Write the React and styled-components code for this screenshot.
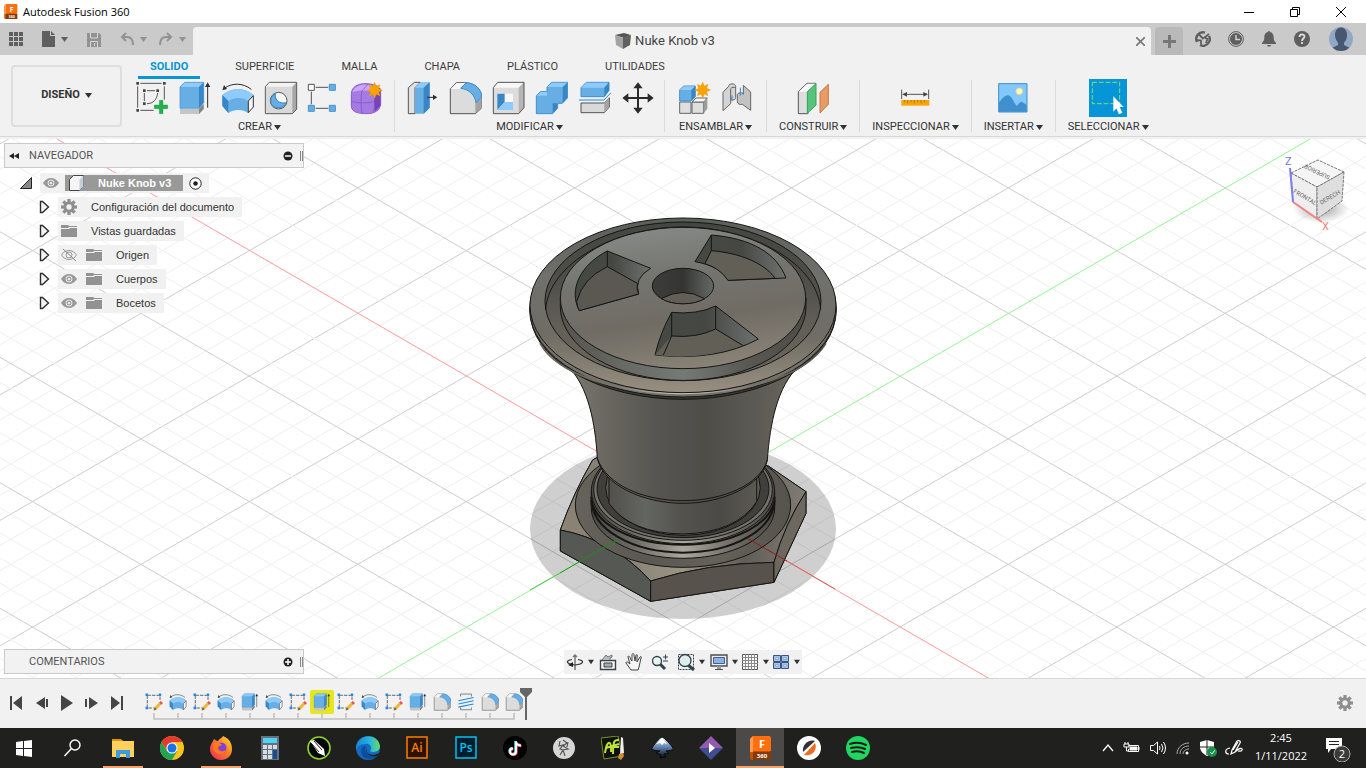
import React from 'react';
import styled, { createGlobalStyle, css } from 'styled-components';

const ui = 'Roboto, "Liberation Sans", sans-serif';
const system = '"Open Sans", "Liberation Sans", sans-serif';

const GlobalStyle = createGlobalStyle`
  *, *::before, *::after { box-sizing: border-box; }
  body { margin: 0; background: #f0f0f0; color: #333; font: 11px/16px ${ui}; overflow: hidden; }
  button { font: inherit; color: inherit; background: none; border: 0; padding: 0; }
  ul { list-style: none; margin: 0; padding: 0; }
  svg { display: block; flex: none; }
`;

const Window = styled.div`
  display: flex;
  flex-direction: column;
  min-height: 100vh;
`;

/* ---------- title bar ---------- */
const TitleBar = styled.header`
  display: flex;
  align-items: center;
  height: 23px;
  padding: 0 2px 0 3px;
  gap: 5px;
  background: #fff;
  color: #000;
  font-family: ${system};
`;
const AppTitle = styled.h1`
  flex: 1;
  margin: 0;
  font-size: 11px;
  font-weight: 400;
`;
const WindowButtons = styled.div`
  display: flex;
`;
const WindowButton = styled.button`
  display: grid;
  place-items: center;
  width: 46px;
  height: 21px;
`;

/* ---------- document tab bar ---------- */
const TabBar = styled.div`
  display: flex;
  align-items: flex-end;
  height: 32px;
  background: #cacaca;
  color: #5f5f5f;
`;
const QuickAccess = styled.div`
  display: flex;
  align-items: center;
  width: 193px;
  height: 32px;
  padding-left: 9px;
`;
const QuickButton = styled.button`
  display: flex;
  align-items: center;
  gap: 6px;
  height: 20px;
  margin-right: ${(p) => p.$after || 0}px;
  color: ${(p) => (p.$dim ? '#929292' : '#5f5f5f')};
`;
const DocumentTab = styled.div`
  display: flex;
  flex: 1;
  align-items: center;
  height: 28px;
  padding-right: 5px;
  border-radius: 4px 4px 0 0;
  background: #f1f1f1;
`;
const DocumentName = styled.div`
  display: flex;
  flex: 1;
  align-items: center;
  justify-content: center;
  gap: 4px;
  padding-left: 3px;
  color: #444;
  font-size: 13px;
`;
const CloseTab = styled.button`
  display: grid;
  place-items: center;
  width: 12px;
  height: 20px;
`;
const NewTab = styled.button`
  display: grid;
  place-items: center;
  width: 28px;
  height: 28px;
  margin: 0 3px 0 4px;
  border-radius: 4px 4px 0 0;
  background: #b9b9b9;
  color: #777;
`;
const AccountButtons = styled.div`
  display: flex;
  align-items: center;
  height: 32px;
  padding-right: 13px;
`;
const AccountButton = styled.button`
  display: grid;
  place-items: center;
  width: 33px;
  height: 32px;
`;
const Avatar = styled.button`
  margin-left: 11px;
`;

/* ---------- ribbon ---------- */
const Ribbon = styled.div`
  display: flex;
  min-height: 84px;
  padding-left: 11px;
  background: linear-gradient(#f1f1f1 81px, #d8d8d8 81px, #d8d8d8 82px, #f1f1f1 82px);
`;
const Workspace = styled.button`
  display: flex;
  align-items: center;
  justify-content: center;
  gap: 5px;
  width: 111px;
  height: 62px;
  margin: 10px 3px 0 0;
  padding-bottom: 2px;
  border: 2px solid #dedede;
  border-radius: 4px;
  font-weight: 700;
`;
const RibbonBody = styled.div`
  flex: 1;
`;
const RibbonTabs = styled.nav`
  display: flex;
  gap: 23px;
  height: 24px;
  padding-left: 13px;
`;
const RibbonTab = styled.button`
  height: 24px;
  padding: 2px 12px 0;
  border-bottom: 3px solid ${(p) => (p.$active ? '#0696d7' : 'transparent')};
  color: ${(p) => (p.$active ? '#0696d7' : '#3c3c3c')};
  font-weight: ${(p) => (p.$active ? 700 : 400)};
`;
const Groups = styled.div`
  display: flex;
`;
const Group = styled.section`
  position: relative;
  display: flex;
  flex-direction: column;
  align-items: center;
  padding: 0 ${(p) => (p.$wide ? 10 : 12)}px;
  border-right: 1px solid transparent;
  border-image: linear-gradient(transparent 2px, #dadada 2px, #dadada 52px, transparent 52px) 1;
  &:last-child { border: 0; }
`;
const Tools = styled.div`
  display: flex;
  align-items: center;
  gap: 9px;
  height: 38px;
`;
const GroupMenu = styled.button`
  display: flex;
  align-items: center;
  gap: 2px;
  height: 20px;
`;
const ToolButton = styled.button`
  display: grid;
  place-items: center;
  width: ${(p) => (p.$active ? 38 : 34)}px;
  height: ${(p) => (p.$active ? 38 : 34)}px;
  background: ${(p) => (p.$active ? '#0696d7' : 'none')};
`;

/* ---------- canvas ---------- */
const Canvas = styled.main`
  position: relative;
  display: flex;
  flex: 1;
  flex-direction: column;
  justify-content: space-between;
  min-height: 300px;
  padding: 4px;
  background: #fff;
  overflow: hidden;
`;
const Scene = styled.svg`
  position: absolute;
  inset: 0;
  width: 100%;
  height: 100%;
`;
const CubeSlot = styled.div`
  position: absolute;
  top: 11px;
  right: 14px;
`;
const PanelHeader = styled.div`
  position: relative;
  display: flex;
  align-items: center;
  width: 300px;
  height: 25px;
  padding: 0 0 0 4px;
  border: 1px solid #c9c9c9;
  background: #f2f2f2;
  color: #555;
`;
const PanelTitle = styled.span`
  flex: 1;
  padding-left: ${(p) => (p.$indent ? 20 : 10)}px;
`;
const Grip = styled.span`
  width: 3px;
  height: 10px;
  margin-left: 7px;
  border: solid #888;
  border-width: 0 1px;
`;
const Tree = styled.ul`
  position: relative;
  padding-top: 3px;
`;
const TreeRow = styled.li`
  display: flex;
  align-items: center;
  height: 24px;
  padding-left: ${(p) => (p.$root ? 16 : 35)}px;
  gap: 8px;
  font-family: "Liberation Sans", Arial, sans-serif;
`;
const TreeItem = styled.div`
  display: flex;
  align-items: center;
  gap: ${(p) => (p.$root ? 6 : 9)}px;
  height: 20px;
  padding: 0 ${(p) => (p.$root ? 7 : 8)}px 0 3px;
  background: #f1f1f1;
`;
const TreeLabel = styled.span`
  padding-left: 5px;
`;
const RootLabel = styled.span`
  display: flex;
  align-items: center;
  gap: 13px;
  height: 16px;
  width: 118px;
  padding-left: 3px;
  background: #999;
  color: #fff;
  font-weight: 700;
`;
const BottomOverlay = styled.div`
  position: relative;
  display: flex;
  justify-content: center;
`;
const Comments = styled.div`
  position: absolute;
  left: 0;
  bottom: 0;
`;
const ViewTools = styled.div`
  display: flex;
  align-items: center;
  gap: 8px;
  height: 24px;
  padding: 0 2px;
  background: #f1f1f1;
`;
const ViewTool = styled.button`
  display: flex;
  align-items: center;
  gap: 4px;
  margin-right: ${(p) => -p.$pull}px;
  &:last-child { margin-right: 0; }
`;

/* ---------- timeline ---------- */
const Timeline = styled.footer`
  display: flex;
  align-items: flex-start;
  height: 50px;
  padding: 9px 13px 0 4px;
  border-top: 1px solid #d6d6d6;
  background: #f1f1f1;
`;
const Playback = styled.div`
  display: flex;
  width: 138px;
  color: #454545;
`;
const PlayButton = styled.button`
  display: grid;
  place-items: center;
  width: 25px;
  height: 29px;
`;
const Features = styled.ol`
  display: flex;
  margin: 0;
  padding: 0;
  list-style: none;
`;
const Feature = styled.li`
  position: relative;
  width: 24px;
  height: 32px;
  background: linear-gradient(#cbcbcb, #cbcbcb) 50% 100% / ${(p) => (p.$edge ? '12px' : '24px')} 2px no-repeat,
    linear-gradient(#cbcbcb, #cbcbcb) 50% 100% / 2px 7px no-repeat;
  ${(p) => p.$edge === 'start' && css`background-position: 100% 100%, 50% 100%;`}
  ${(p) => p.$edge === 'end' && css`background-position: 0 100%, 50% 100%;`}
`;
const FeatureButton = styled.button`
  display: grid;
  place-items: center;
  width: 24px;
  height: 24px;
  margin-top: 2px;
  border-radius: 2px;
  background: ${(p) => (p.$selected ? '#e5e61e' : 'none')};
`;
const MarkerSlot = styled.li`
  margin-left: -6px;
`;
const SettingsButton = styled.button`
  margin: 7px 0 0 auto;
`;

/* ---------- system task bar ---------- */
const Taskbar = styled.footer`
  display: flex;
  height: 40px;
  background: #20201f;
  color: #fff;
  font-family: ${system};
`;
const TaskApps = styled.div`
  display: flex;
  gap: 1px;
`;
const TaskButton = styled.button`
  display: grid;
  place-items: center;
  width: 48px;
  height: 40px;
  background: ${(p) => (p.$current ? '#4c4a49' : 'none')};
  background-image: ${(p) => (p.$open || p.$current ? 'linear-gradient(#f7a26c, #f7a26c)' : 'none')};
  background-size: ${(p) => (p.$current ? '48px' : '40px')} 2px;
  background-position: 50% 100%;
  background-repeat: no-repeat;
  &:nth-child(2) { margin-right: 1px; }
`;
const Tray = styled.div`
  display: flex;
  align-items: center;
  gap: 8px;
  margin-left: auto;
`;
const Clock = styled.div`
  width: 60px;
  padding-bottom: 2px;
  font-size: 11px;
  line-height: 18px;
  text-align: center;
`;
const Notifications = styled.button`
  margin: 0 15px 0 4px;
`;

/* ---------- icon helpers ---------- */
const Caret = ({ s = 7 }) => (
  <svg width={s} height={s} viewBox="0 0 7 7"><path d="M0 1h7L3.500 6z" fill="currentColor" /></svg>
);
const Svg = ({ s = 34, children, box = 102 }) => (
  <svg width={s} height={s} viewBox={`0 0 ${box} ${box}`} fill="none" strokeWidth="3">{children}</svg>
);
const Star = ({ x, y }) => (
  <path transform={`translate(${x} ${y})`} fill="#f9a200" stroke="#e59400" strokeWidth="1"
    d="M0-24 5-12 16-17 12-5 24 0 12 5 16 17 5 12 0 24-5 12-16 17-12 5-24 0-12-5-16-17-5-12z" />
);

const SketchIcon = () => (
  <Svg>
    <path d="M16 7h64M88 16v40M8 16v64M16 88h40M36 29h24M28 36v24M68 36c-2 20-14 32-32 32" stroke="#555" />
    <g fill="#444">
      <path d="M4 3h8v8H4zM84 3h8v8h-8zM4 84h8v8H4zM24 25h8v8h-8zM64 25h8v8h-8zM24 64h8v8h-8z" />
    </g>
    <path d="M73 58h11v14h14v11H84v15H73V83H58V72h15z" fill="#22b14c" stroke="#168a38" strokeWidth="1" />
  </Svg>
);
const ExtrudeIcon = ({ s }) => (
  <Svg s={s}>
    <path d="M6 84h57l14-15v15L63 99H6z" fill="#c5c5c5" /><path d="m63 84 14-15v15L63 99z" fill="#858585" />
    <path d="M6 18 20 4h57v61L63 82H6z" fill="#67aee5" />
    <path d="M6 18 20 4h57L63 18z" fill="#8ecbfa" /><path d="M63 18 77 4v61L63 82z" fill="#3a86c4" />
    <path d="M6 18 20 4h57v61L63 82H6z" stroke="#3f90cf" strokeWidth="2" />
    <path d="M89 80V14" stroke="#2d2d2d" /><path d="m89 4 8 14H81z" fill="#2d2d2d" />
  </Svg>
);
const RevolveIcon = ({ s }) => (
  <Svg s={s}>
    <path d="M10 22C33 5 65 5 91 25" stroke="#2d2d2d" /><path d="m4 28 5-16 9 12z" fill="#2d2d2d" />
    <path d="M4 42C33 18 70 18 98 42L81 59v37C67 84 38 84 22 96L4 74z" fill="#67aee5" />
    <path d="M4 42C33 18 70 18 98 42L81 60C66 48 40 48 22 60z" fill="#8ecbfa" />
    <path d="M4 42 22 60v36L4 75z" fill="#3a86c4" />
    <path d="m82 60 15-16v34L82 95z" fill="#f5f5f5" stroke="#333" />
  </Svg>
);
const HoleIcon = () => (
  <Svg>
    <path d="m4 17 12-13h82v81L85 98H4z" fill="#d9d9d9" /><path d="M4 17 16 4h82L85 17z" fill="#f3f3f3" />
    <path d="M85 17 98 4v81L85 98z" fill="#a6a6a6" /><path d="m4 17 12-13h82v81L85 98H4z" stroke="#5c5c5c" />
    <circle cx="44" cy="59" r="25" fill="#f6f6f6" stroke="#555" />
    <path d="M34 38c-14 8-18 24-9 35 12 13 36 9 42-8-18 5-36-6-33-27z" fill="#67aee5" stroke="#3483bf" />
  </Svg>
);
const PatternIcon = () => (
  <Svg>
    <path d="M26 19h38M13 32v38M26 82h38" stroke="#555" />
    <path d="M4 10h18v18H4z" fill="#fff" stroke="#555" />
    <path d="M67 10h18v18H67zM4 73h18v18H4zM67 73h18v18H67z" fill="#67aee5" stroke="#4693cf" />
  </Svg>
);
const FormIcon = () => (
  <Svg>
    <path d="M4 38C5 18 22 8 45 8s47 6 47 25v36c-2 20-19 29-42 29S5 94 4 76z" fill="#a57be3" stroke="#8a5cc9" />
    <path d="M7 34C14 17 25 11 49 11l30 5-14 15c-20-4-43-3-58 3z" fill="#cda5ff" />
    <path d="M73 32 91 20v54L74 92z" fill="#7742b8" />
    <path d="M5 62c20 5 48 5 66 0l21-14M36 30c-4 20-4 46 0 66M36 30 54 9M72 32c3 20 2 42-1 60" stroke="#7d4dbd" strokeWidth="2" />
    <Star x="74" y="28" />
  </Svg>
);
const PressPullIcon = () => (
  <Svg>
    <path d="M10 20 28 4h18L30 20v78H10z" fill="#e1e1e1" stroke="#555" />
    <path d="M30 20 47 4h27v76L56 98H30z" fill="#67aee5" /><path d="M30 20 47 4h27L56 20z" fill="#8ecbfa" />
    <path d="M56 20 74 4v76L56 98z" fill="#3a86c4" />
    <path d="M66 49h20" stroke="#2d2d2d" /><path d="m97 49-13-8v16z" fill="#2d2d2d" />
  </Svg>
);
const FilletIcon = ({ s }) => (
  <Svg s={s}>
    <path d="M7 24 25 5h25c28 0 51 18 51 46v30L82 98H7z" fill="#dcdcdc" stroke="#555" />
    <path d="M8 24 26 6h24L38 24z" fill="#f7f7f7" /><path d="m82 62 19-12v31L82 97z" fill="#a4a4a4" />
    <path d="M38 22 55 5c27 2 46 19 46 43L84 65C80 42 64 25 38 22z" fill="#67aee5" stroke="#3f90cf" />
  </Svg>
);
const ShellIcon = () => (
  <Svg>
    <path d="M7 20 20 4h79v76L83 98H7z" fill="#dcdcdc" /><path d="M7 20 20 4h79L83 20z" fill="#f7f7f7" />
    <path d="M83 20 99 4v76L83 98z" fill="#b5b5b5" /><path d="M7 20 20 4h79v76L83 98H7z" stroke="#555" />
    <path d="M19 38h47v48H19z" fill="#f8f8f8" />
    <path d="M19 38h22v25L19 87z" fill="#3a86c4" /><path d="M41 63h25v24H19z" fill="#8ecbfa" />
  </Svg>
);
const CombineIcon = () => (
  <Svg>
    <path d="m7 44 12-12h20V18L53 4h48v46L85 67H71v14L56 98H7z" fill="#67aee5" stroke="#3f90cf" />
    <path d="m8 44 12-11h19v11zM40 18 54 5h46L86 18z" fill="#8ecbfa" />
    <path d="m86 18 14-13v45L86 66zM56 67h14v14L56 97z" fill="#3a86c4" />
  </Svg>
);
const SplitIcon = () => (
  <Svg>
    <path d="M12 20 28 4h68v24L82 47H12z" fill="#67aee5" stroke="#3f90cf" /><path d="M13 20 28 5h66L82 20z" fill="#8ecbfa" />
    <path d="m82 20 14-16v24L82 47z" fill="#3a86c4" />
    <path d="M12 66h70l15-16v28L82 95H12z" fill="#d9d9d9" stroke="#555" /><path d="m82 66 14-16v28L82 95z" fill="#a4a4a4" />
    <path d="M6 58h75l21-21" stroke="#f1f1f1" strokeWidth="9" /><path d="M6 57h75l21-22" stroke="#1e8be0" />
  </Svg>
);
const MoveIcon = () => (
  <Svg>
    <path d="M54 18v66M21 51h66" stroke="#2b2b2b" strokeWidth="6" />
    <path d="m54 4 14 18H40zM54 98 40 80h28zM7 51l18-14v28zM101 51 83 65V37z" fill="#2b2b2b" />
  </Svg>
);
const ComponentIcon = () => (
  <Svg>
    <path d="M8 63h34v34H8zM45 63h35v34H45z" fill="#dedede" stroke="#666" />
    <path d="m45 63 12-12h34L80 63z" fill="#f7f7f7" stroke="#666" /><path d="m80 63 11-12v32L80 97z" fill="#9b9b9b" />
    <path d="m8 27 12-12h35v32L43 60H8z" fill="#67aee5" stroke="#3f90cf" /><path d="m9 27 12-11h33L43 27z" fill="#8ecbfa" />
    <path d="m43 27 11-11v31L43 59z" fill="#3a86c4" /><Star x="77" y="27" />
  </Svg>
);
const JointIcon = () => (
  <Svg>
    <path d="M9 34 26 16c0-10 21-10 21 0v34c0 9-15 9-15 0v18L9 89z" fill="#d4d4d4" stroke="#666" />
    <path d="M32 50V24c0-6 15-6 15-3" stroke="#666" />
    <path d="m70 13 22 20v55L67 70c-8 2-15-2-15-8V40c3-6 18-6 18 0z" fill="#c2c2c2" stroke="#666" />
    <path d="M36 43v18M61 20v24" stroke="#1e8be0" />
  </Svg>
);
const PlaneIcon = () => (
  <Svg>
    <path d="M7 32 33 7h27L36 32v66H7z" fill="#dedede" stroke="#555" /><path d="M8 32 34 8h25L36 32z" fill="#fafafa" />
    <path d="M34 32 60 8v64L34 97z" fill="#58c47b" stroke="#35a65c" /><path d="M72 34 97 10v60L72 96z" fill="#e79b67" stroke="#c97844" />
  </Svg>
);
const MeasureIcon = () => (
  <Svg>
    <path d="M8 26v28M89 26v28M13 40h71" stroke="#555" /><path d="m10 40 14-7v14zM87 40l-14 7V33z" fill="#444" />
    <path d="M7 57h84v17H7z" fill="#f9a400" /><path d="M17 57v7m9-7v10m10-10v7m10-7v10m10-10v7m10-7v10m10-10v7" stroke="#86642a" strokeWidth="2" />
  </Svg>
);
const ImageIcon = () => (
  <Svg>
    <path d="M8 8h85v85H8z" fill="#83c8fb" stroke="#3c8fcb" />
    <path d="M9 64c10-10 16-21 26-21 13 0 18 23 27 32 5-4 9-14 16-13l14 10v20H9z" fill="#3f90cc" />
    <circle cx="70" cy="31" r="10" fill="#fff7c8" stroke="#e8d98e" />
  </Svg>
);
const SelectIcon = () => (
  <Svg s={38} box={114}>
    <path d="M10 10h82v64H10z" stroke="#7ae07a" strokeDasharray="14 6" />
    <path d="m73 52 31 32H92l8 17-10 5-8-18-9 10z" fill="#fff" />
  </Svg>
);
const EditSketchIcon = () => (
  <Svg s={18}>
    <path d="M13 13h72v32M13 13v72h36" stroke="#555" strokeWidth="5" strokeDasharray="20 6" />
    <path d="M3 3h14v14H3zM78 3h14v14H78zM3 78h14v14H3z" fill="#1e8be0" />
    <path d="m55 80 28-29 13 12-29 29-18 7z" fill="#f6b43c" /><path d="m80 54 9-9 13 12-9 9z" fill="#f05252" /><path d="m55 80-6 19 18-7z" fill="#7d5f3c" />
  </Svg>
);
const ThreadIcon = () => (
  <Svg s={18}>
    <path d="M20 20V6h62v14M20 82v13h62V82" fill="#eee" stroke="#777" strokeWidth="5" />
    <path d="m8 44 86-18M8 62l86-18M8 80l86-18" stroke="#1e8be0" strokeWidth="6" />
  </Svg>
);

const Gear = ({ c = '#8e8e8e' }) => (
  <svg width="16" height="16" viewBox="0 0 16 16">
    <g fill={c}>{[0, 45, 90, 135].map((a) => <rect key={a} x="6.4" y="0" width="3.2" height="16" transform={`rotate(${a} 8 8)`} />)}</g>
    <circle cx="8" cy="8" r="4.2" fill="#f1f1f1" stroke={c} strokeWidth="3" />
  </svg>
);
const Folder = () => (
  <svg width="16" height="16" viewBox="0 0 16 16" fill="#929292"><path d="M0 2h7l1.500 1H16v1H8L7 5H0zM0 6h8l1-1h7v9H0z" /></svg>
);
const Eye = ({ off }) => (
  <svg width="16" height="16" viewBox="0 0 16 16" fill="none" stroke="#999">
    <path d="M.5 8C4 2 12 2 15.500 8 12 14 4 14 .5 8z" fill={off ? 'none' : '#999'} />
    <circle cx="8" cy="8" r="3" fill={off ? 'none' : '#999'} stroke={off ? '#999' : '#f1f1f1'} /><circle cx="8" cy="8" r="1.200" fill="#f1f1f1" stroke="none" />
    {off && <path d="m2 2 13 12" stroke="#888" />}
  </svg>
);
const Expander = () => (
  <svg width="11" height="14" viewBox="0 0 11 14"><path d="M1.500 1.500v11h2l6-5.500-6-5.500z" fill="#f4f4f4" stroke="#2c2c2c" strokeWidth="1.400" /></svg>
);
const FusionLogo = ({ s }) => (
  <svg width={s} height={s} viewBox="0 0 24 24">
    <path d="m2 3 3-3h17v24H3l-1-2z" fill="#c75000" /><path d="M5 0h16c1 0 2 1 2 2v13H5z" fill="#ff6f0d" /><path d="M5 16h18v8H5z" fill="#843a0b" />
    <path d="m2 3 3-3v16H2z" fill="#ff9b53" />
    <text x="14" y="12" fill="#fff" fontFamily="Open Sans, sans-serif" fontSize="11" fontWeight="700" textAnchor="middle">F</text>
    <text x="14" y="22" fill="#fff" fontFamily="Open Sans, sans-serif" fontSize="6" fontWeight="700" textAnchor="middle">360</text>
  </svg>
);

/* ---------- 3D scene ---------- */
const SLOPE = 0.5788;
const STEP = 25.1;
const Grid = () => {
  const lines = [];
  for (let i = -45; i <= 45; i += 1) {
    if (i !== 0) {
      const y = 501.6 + i * STEP;
      const stroke = i % 5 === 0 ? '#cdcdcd' : '#efefef';
      lines.push(<path key={i} stroke={stroke} d={`M-317 ${y - 1000 * SLOPE}L1683 ${y + 1000 * SLOPE}M-317 ${y + 1000 * SLOPE}L1683 ${y - 1000 * SLOPE}`} />);
    }
  }
  return <g>{lines}</g>;
};

const Knob = () => (
  <g strokeLinejoin="round">
    <g transform="translate(520 380) scale(.33333)" stroke="#151513" strokeWidth="3">
      <path d="M232 232 218 240Q160 340 121 450V513L392 664 762 607 858 400V335L745 258z" fill="#68655d" />
      <path d="M232 232 218 240Q160 340 121 450Q280 480 392 603Q560 550 762 547Q795 430 858 335L745 258z" fill="url(#flange)" />
      <path d="M121 450Q280 480 392 603V664L121 513z" fill="#565853" />
      <path d="M392 603Q560 550 762 547V607L392 664z" fill="#57534c" />
      <path d="M762 547Q795 430 858 335V400L762 607z" fill="#6d685f" />
      <ellipse cx="489" cy="375" rx="323" ry="187" fill="url(#flangeTop)" />
      <path d="M214 335V385A275 150 0 0 0 764 385V335z" fill="url(#ring)" />
      <path d="M214 360A275 158 0 0 0 764 360M214 350A275 144 0 0 0 764 350" fill="none" strokeWidth="6" />
      <ellipse cx="489" cy="333" rx="275" ry="158" fill="url(#ring)" />
      <ellipse cx="489" cy="329" rx="268" ry="152" fill="#73716a" />
      <ellipse cx="489" cy="326" rx="258" ry="147" fill="#403f3b" />
      <ellipse cx="489" cy="323" rx="232" ry="143" fill="#5d5b55" />
      <path d="M267 280V370Q330 460 489 462 650 458 710 365V280z" fill="url(#neck)" />
      <path d="M145-40C205 20 226 130 232 235C250 315 370 370 489 370S728 315 742 240C750 130 772 20 835-40z" fill="url(#body)" />
      <path d="M232 235C260 315 370 362 489 362S720 315 742 240" fill="none" />
    </g>
    <g transform="translate(520 205) scale(.33333)" stroke="#151513" strokeWidth="3">
      <ellipse cx="489" cy="318" rx="459" ry="265" fill="#393833" />
      <ellipse cx="489" cy="312" rx="460" ry="264" fill="#74716a" />
      <path d="M60 415C170 610 790 620 918 415" fill="none" stroke="url(#gleam)" strokeWidth="5" />
      <ellipse cx="489" cy="301" rx="459" ry="262" fill="url(#rim)" />
      <ellipse cx="489" cy="289" rx="414" ry="238" fill="url(#groove)" />
      <path d="M77 315C85 175 285 66 489 66S895 175 902 315" fill="none" />
      <path d="M121 278V305A368 221 0 0 0 858 305V278z" fill="url(#side)" />
      <ellipse cx="489" cy="279" rx="368" ry="212" fill="url(#dome)" />
      <path d="M262 138 392 190Q340 220 356 267L178 317C145 255 180 180 262 138z" fill="url(#wall)" />
      <path d="M262 185 352 235Q349 250 356 267L178 317Q170 302 170 290 188 220 262 185z" fill="#5b5851" />
      <path d="M262 138V185" />
      <path d="M574 90C695 100 770 145 798 219L624 226C610 195 570 178 525 170z" fill="url(#wall)" />
      <path d="M574 137C660 144 735 175 765 220L624 226Q600 190 555 176z" fill="#625f57" />
      <path d="M574 90V137" />
      <path d="M455 322Q530 330 587 303L715 402Q590 470 405 450Q420 385 455 322z" fill="url(#wall)" />
      <path d="M455 393Q530 400 587 372L668 421Q550 465 430 452L405 450z" fill="#625f57" stroke="none" />
      <path d="M430 450 455 393Q530 400 587 372L668 421" fill="none" />
      <path d="M455 322V393M587 303V372" />
      <ellipse cx="489" cy="243" rx="92" ry="53" fill="url(#hole)" />
      <path d="M424 281Q489 244 554 281A92 53 0 0 1 424 281z" fill="#625f57" />
    </g>
  </g>
);

const Gradient = ({ id, stops, down }) => (
  <linearGradient id={id} x1="0" y1="0" x2={down ? 0 : 1} y2={down ? 1 : 0}>
    {stops.map((c, i) => <stop key={c + i} offset={i / (stops.length - 1)} stopColor={c} />)}
  </linearGradient>
);

const Viewport = () => (
  <Scene viewBox="0 139 1366 539" preserveAspectRatio="xMidYMid slice" role="img" aria-label="Nuke Knob v3">
    <defs>
      <Gradient id="body" stops={['#7b7870', '#66645d', '#555450', '#4f4d48', '#5b5953', '#69665e']} />
      <Gradient id="neck" stops={['#51504b', '#646662', '#53524d', '#4c4a46', '#5c5952']} />
      <Gradient id="ring" stops={['#4a4945', '#706e66', '#aaa79c', '#75716a', '#4a4844']} />
      <Gradient id="flange" stops={['#8b8375', '#858075', '#9c9485', '#605d56', '#817d75']} />
      <Gradient id="flangeTop" stops={['#66635c', '#5b5851', '#65625a', '#56534d']} />
      <Gradient id="rim" down stops={['#5b5d59', '#70716d', '#6f6c64', '#988f80']} />
      <Gradient id="groove" down stops={['#444641', '#4e4d48', '#625f57', '#6b675f']} />
      <Gradient id="side" stops={['#55534d', '#676963', '#757a75', '#5a5953', '#4d4b46']} />
      <Gradient id="wall" stops={['#464844', '#454743', '#6e726e']} />
      <Gradient id="hole" stops={['#3d3e3b', '#343532', '#656a67']} />
      <Gradient id="gleam" stops={['#66625a', '#777369', '#cac8bd', '#77746b', '#555249']} />
      <linearGradient id="dome" x1=".35" y1="0" x2=".6" y2="1">
        <stop offset="0" stopColor="#858985" /><stop offset=".35" stopColor="#74746f" />
        <stop offset=".65" stopColor="#706c64" /><stop offset="1" stopColor="#8a8377" />
      </linearGradient>
    </defs>
    <Grid />
    <ellipse cx="683" cy="529" rx="153" ry="90" fill="#000" fillOpacity=".19" />
    <path d="M57 139 990 679" stroke="#ff9a9a" />
    <path d="M1310 139 377 679" stroke="#93f593" />
    <Knob />
    <path d="m560 573 57-33" stroke="#169016" /><path d="m530 590 30-17" stroke="#4cc44c" />
    <path d="m747 538 40 23" stroke="#8e201c" /><path d="m787 561 48 28" stroke="#d16060" />
  </Scene>
);

const ViewCube = () => (
  <svg width="68" height="84" viewBox="1284 150 68 84" role="img" aria-label="ViewCube">
    <defs><radialGradient id="cubeShade"><stop offset="0" stopColor="#777" stopOpacity=".7" /><stop offset="1" stopColor="#777" stopOpacity="0" /></radialGradient></defs>
    <ellipse cx="1321" cy="209" rx="28" ry="14" fill="url(#cubeShade)" />
    <g stroke="#777" strokeDasharray="3 1">
      <path d="m1291 173 27-13 26 12-27 15z" fill="#f5f5f5" />
      <path d="m1291 173 26 14v32l-24-17z" fill="#eee" /><path d="m1344 172-27 15v32l25-18z" fill="#dedede" />
    </g>
    <g fill="#666" fontFamily="Roboto, sans-serif" fontSize="6" textAnchor="middle">
      <text transform="translate(1318 170) rotate(206)">SUPERIOR</text>
      <text transform="translate(1304 199) rotate(30)">FRONTAL</text>
      <text transform="translate(1331 199) rotate(-30)">DERECH</text>
    </g>
    <path d="m1290 168 3 34" stroke="#7b7bf5" strokeWidth="2" /><path d="m1293 202 29 20" stroke="#f58080" strokeWidth="2" />
    <text x="1285" y="165" fill="#7070f0" fontFamily="Roboto, sans-serif" fontSize="11">Z</text>
    <text x="1322" y="230" fill="#f58080" fontFamily="Roboto, sans-serif" fontSize="11">X</text>
  </svg>
);

/* ---------- data ---------- */
const groups = [
  { name: 'CREAR', wide: true, icons: [SketchIcon, ExtrudeIcon, RevolveIcon, HoleIcon, PatternIcon, FormIcon] },
  { name: 'MODIFICAR', wide: true, icons: [PressPullIcon, FilletIcon, ShellIcon, CombineIcon, SplitIcon, MoveIcon] },
  { name: 'ENSAMBLAR', icons: [ComponentIcon, JointIcon] },
  { name: 'CONSTRUIR', icons: [PlaneIcon] },
  { name: 'INSPECCIONAR', icons: [MeasureIcon] },
  { name: 'INSERTAR', icons: [ImageIcon] },
  { name: 'SELECCIONAR', active: true, icons: [SelectIcon] },
];
const tree = [
  { label: 'Configuración del documento', icon: Gear },
  { label: 'Vistas guardadas', icon: Folder },
  { label: 'Origen', icon: Folder, eye: 'off' },
  { label: 'Cuerpos', icon: Folder, eye: 'on' },
  { label: 'Bocetos', icon: Folder, eye: 'on' },
];
const S = EditSketchIcon, R = RevolveIcon, E = ExtrudeIcon, F = FilletIcon;
const features = [S, R, S, R, E, R, S, E, S, R, S, E, F, ThreadIcon, F, F];

const ring = { fill: 'none', stroke: 'currentColor' };
const account = [
  ['Extensiones', <svg width="16" height="16" viewBox="0 0 16 16" {...ring} strokeWidth="2.400"><path d="M10 1.600A6.700 6.700 0 0 0 2 11M5 14a6.700 6.700 0 0 0 9-9" /><path d="M4 3.500 8.500 8M14 3l-4.500 3.500 3 1.500-1.500 4M1 9l5 .5v4" strokeWidth="1.800" /></svg>],
  ['Estado', <svg width="16" height="16" viewBox="0 0 16 16"><circle cx="8" cy="8" r="7.400" {...ring} /><circle cx="8" cy="8" r="6" fill="currentColor" /><path d="M8 4v4.500h4" fill="none" stroke="#d0d0d0" strokeWidth="1.500" /></svg>],
  ['Notificaciones', <svg width="16" height="16" viewBox="0 0 16 16" fill="currentColor"><path d="M7 1c0-1.300 2-1.300 2 0 3 .7 3.700 3 3.700 6 0 2 .8 3.500 2.300 5v1H1v-1c1.500-1.500 2.300-3 2.300-5 0-3 .7-5.300 3.700-6zM6 14h4c0 2-4 2-4 0z" /></svg>],
  ['Ayuda', <svg width="16" height="16" viewBox="0 0 16 16"><circle cx="8" cy="8" r="8" fill="currentColor" /><path d="M5.500 6c0-3.500 5-3.300 5-.4C10.500 7.500 8 7.600 8 10M8 11v2" fill="none" stroke="#ddd" strokeWidth="1.800" /></svg>],
];
const playback = [
  ['Inicio', 'M1 1h2v14H1zM13 1v14L4 8z'],
  ['Paso atrás', 'M11 2v12L2 8zM12 4h2v8h-2z'],
  ['Reproducir', 'M2 0v16l12-8z'],
  ['Paso adelante', 'M5 2v12l9-6zM1 4h2v8H1z'],
  ['Final', 'M12 1h2v14h-2zM2 1v14l9-7z'],
];

const viewTools = [
  ['Órbita', 3, <svg width="18" height="18" viewBox="0 0 18 18" fill="none" stroke="#333"><path d="M9 2v15M7 4l2-2 2 2" strokeWidth="1.500" stroke="#777" /><path d="M6 6.500C-1 7.500 0 11 9 12c9-1 10-4.500 3-5.500" strokeWidth="1.200" /><path d="m2 12 5-3v5z" fill="#222" stroke="none" /></svg>],
  ['Mirar a', 0, <svg width="18" height="18" viewBox="0 0 18 18" fill="none" stroke="#3d4248"><path d="M1.500 7.500h15v9h-15z" fill="#f8f8f8" strokeWidth="1.400" /><path d="M5 10h8v4H5z" fill="#a9adb5" /><path d="m3 7 4-5 2 2 4-2v2l-2 1v2" fill="#bbb" stroke="#777" /></svg>],
  ['Encuadre', 0, <svg width="18" height="18" viewBox="0 0 18 18"><path d="M6 17 1 10c0-2 2-1 4 1L3 4c0-2 2-1 3 3l1 1V2c0-2 2-2 2 0l1 6 1-6c1-1 2 0 1 2v5l3-5c1-1 2 0 1 1l-2 9-1 3z" fill="#f5f5f5" stroke="#444" /></svg>],
  ['Zoom', 0, <svg width="18" height="18" viewBox="0 0 18 18" fill="none" stroke="#33424d"><path d="m9 11 5 5" strokeWidth="3" /><circle cx="6" cy="8" r="4.500" fill="#e8f3f3" strokeWidth="1.300" /><path d="M12 4h5M14.500 1.500v5M12 8h5" /></svg>],
  ['Ajustar', 3, <svg width="18" height="18" viewBox="0 0 18 18" fill="none" stroke="#33424d"><path d="M1.500 1.500h15v15h-15z" strokeDasharray="2 1" /><path d="m11 12 6 5" strokeWidth="3" /><circle cx="8" cy="7.500" r="6" fill="#dceeee" strokeWidth="1.300" /></svg>],
  ['Visualización', 5, <svg width="18" height="18" viewBox="0 0 18 18"><path d="M1 2h16v11H1z" fill="#eee" stroke="#4a4d52" strokeWidth="1.400" /><path d="M3.500 4.500h11v6h-11z" fill="#8eb2e6" stroke="#44618f" /><path d="M7 13h4v3H7z" fill="#999" /><path d="M5 16.500h8" stroke="#555" /></svg>],
  ['Rejilla', 5, <svg width="18" height="18" viewBox="0 0 18 18"><path d="M1.500 1.500h15v15h-15z" fill="#fff" stroke="#555" /><path d="M4.500 1v16m3-16v16m3-16v16m3-16v16M1 4.500h16m-16 3h16m-16 3h16m-16 3h16" stroke="#888" /></svg>],
  ['Ventanas', 5, <svg width="18" height="18" viewBox="0 0 18 18"><path d="M1.500 2.500h7v6h-7zM9.500 2.500h7v6h-7zM1.500 9.500h7v6h-7zM9.500 9.500h7v6h-7z" fill="#a6c5ee" stroke="#3e5478" /><path d="M3.500 4.500h3v2h-3zM11.500 4.500h3v2h-3zM3.500 11.500h3v2h-3zM11.500 11.500h3v2h-3z" fill="#c9dcf4" stroke="#8cabd8" /></svg>],
];

const T = ({ children }) => <svg width="24" height="24" viewBox="0 0 24 24">{children}</svg>;
const AdobeTile = ({ label, color, bg }) => (
  <T><path d="M2 1h20v21H2z" fill={bg} stroke={color} strokeWidth="1.500" /><text x="12" y="16" fill={color} fontFamily="Open Sans, sans-serif" fontSize="12" fontWeight="600" textAnchor="middle">{label}</text></T>
);
const apps = [
  ['Inicio', <T><path d="m4 6 7-1v7H4zM12 5l8-1v8h-8zM4 13h7v7l-7-1zM12 13h8v8l-8-1z" fill="#fff" /></T>],
  ['Buscar', <T><circle cx="14" cy="9" r="5" fill="none" stroke="#fff" strokeWidth="1.400" /><path d="m10.500 12.500-7 7.500" stroke="#fff" strokeWidth="1.500" /></T>],
  ['Explorador', <T><path d="M1 3h9l2 2H1z" fill="#d9960b" /><path d="M1 5h22v16H1z" fill="#ffd15c" /><path d="M5 22v-8h14v8h-4v-4H9v4z" fill="#3a9bdf" /></T>, 'open'],
  ['Chrome', <T><circle cx="12" cy="12" r="12" fill="#f9c51b" /><path d="M1.600 6a12 12 0 0 1 20.800 0H12l-5 9z" fill="#e33b2e" /><path d="M1.600 6 6.800 15H12l5.200 0L12 24A12 12 0 0 1 1.600 6z" fill="#23a455" /><circle cx="12" cy="12" r="5.600" fill="#fff" /><circle cx="12" cy="12" r="4.500" fill="#1a73e8" /></T>],
  ['Firefox', <T><defs><linearGradient id="fox" x1="1" x2="0" y2="1"><stop stopColor="#ffe634" /><stop offset=".45" stopColor="#ff7b24" /><stop offset="1" stopColor="#ee2366" /></linearGradient></defs><path d="M5 3c2 1 2 2 4 2 2-3 4-3 5-5 7 3 9 8 9 13 0 7-5 11-11 11S1 19 1 13c0-4 2-6 4-10z" fill="url(#fox)" /><circle cx="12" cy="12" r="5.500" fill="#8341d3" /><path d="M5 7c4-2 6 0 8 2l-4 2c0 5 5 5 8 3-1 6-12 5-13-2z" fill="#ff7a1c" /></T>, 'open'],
  ['Calculadora', <T><path d="M3 0h18v24H3z" fill="#68717b" /><path d="M5 2h14v5H5z" fill="#4dd4f5" /><path d="M5 9h4v4H5zM10 9h4v4h-4zM15 9h4v4h-4zM5 14h4v4H5zM10 14h4v4h-4zM5 19h4v4H5zM10 19h4v4h-4z" fill="#d5dce2" /><path d="M15 14h4v9h-4z" fill="#164d92" /></T>],
  ['CorelDRAW', <T><circle cx="12" cy="12" r="11" fill="#050505" stroke="#8fd329" strokeWidth="1.600" /><path d="m3 5 4-1 10 9 1 7-7-3z" fill="#fff" /><path d="m7 5 8 9M4 7l8 9" stroke="#222" /></T>],
  ['Edge', <T><defs><linearGradient id="edge"><stop stopColor="#1685d9" /><stop offset=".6" stopColor="#2cb6d8" /><stop offset="1" stopColor="#63dd67" /></linearGradient></defs><circle cx="12" cy="12" r="12" fill="#126bc0" /><path d="M0 11C2-3 22-3 24 10c0 6-7 7-10 5 3-3 0-8-5-7-5 0-8 3-9 7z" fill="url(#edge)" /><path d="M10 10c-3 6 3 13 12 8-3 6-16 8-17-3 0-3 2-5 5-5z" fill="#0b4d9b" /><path d="M11 12c-2 6 5 9 12 5l-2 3c-8 2-13-5-10-8z" fill="#20201f" /></T>],
  ['Illustrator', <AdobeTile label="Ai" color="#ff7c00" bg="#2a1400" />],
  ['Photoshop', <AdobeTile label="Ps" color="#00c1f3" bg="#001d2b" />],
  ['TikTok', <T><circle cx="12" cy="12" r="12" fill="#000" /><g fill="none" strokeWidth="2.600"><path d="M12.500 5v10a3 3 0 1 1-3-3M12.500 5c0 3 2 4 5 4" stroke="#25f4ee" /><path d="M13.500 6v10a3 3 0 1 1-3-3M13.500 6c0 3 2 4 5 4" stroke="#fe2c55" /><path d="M13 5.500v10a3 3 0 1 1-3-3M13 5.500c0 3 2 4 5 4" stroke="#fff" strokeWidth="2" /></g></T>],
  ['Rhinoceros', <T><circle cx="12" cy="12" r="11" fill="#d6d6d6" /><path d="M8 5 7 10l4-1-3 4 3 1-3 5M11 4l4 3-4 3 5 3-5 1 2 6M16 6l-1 5" fill="none" stroke="#555" strokeWidth="1.200" /></T>],
  ['Artcam', <T><path d="m0 2 17-2 4 20L3 23z" fill="#101010" stroke="#73941e" /><path d="M4 17C6 3 11 4 10 16M5 12l13-4M12 18c0-15 2-14 6-14M13 11h5" fill="none" stroke="#bce335" strokeWidth="2" /><path d="m20 1 2 1 1 15-4 2z" fill="#eee" /><path d="m18 18 4-1 1 3-3 4-3-2z" fill="#d68a36" /></T>],
  ['Inkscape', <T><defs><linearGradient id="ink" x2="0" y2="1"><stop stopColor="#eef5ff" /><stop offset=".5" stopColor="#5c7fac" /><stop offset="1" stopColor="#050505" /></linearGradient></defs><path d="M12 1c2 0 10 9 11 11s-4 3-7 3l3 2-5 1 2 3-6 1 1-3-5-2 4-2c-4 0-9-1-8-3S10 1 12 1z" fill="url(#ink)" stroke="#090909" /><path d="m12 2 5 6-3-1-2 2-2-2-4 1z" fill="#fff" /></T>],
  ['Vídeo', <T><path d="m12 0 12 12H0z" fill="#935baf" /><path d="m0 12 12 12 12-12z" fill="#3f4d91" /><path d="m10 7 6 5-6 5z" fill="#fff" /></T>],
  ['Fusion 360', <FusionLogo s={24} />, 'current'],
  ['PrusaSlicer', <T><circle cx="12" cy="12" r="12" fill="#fff" /><path d="M6 16c-1-7 5-13 12-11z" fill="#333" /><path d="M7 19 18 7c3 7-3 14-11 12z" fill="#f26a21" /></T>],
  ['Spotify', <T><circle cx="12" cy="12" r="12" fill="#1ed760" /><path d="M4 8c6-2 12-1 16 1M5 12c5-1 10-1 14 1M6 16c4-1 8-1 12 1" fill="none" stroke="#191919" strokeWidth="2" strokeLinecap="round" /></T>],
];

const CubeGlyph = () => (
  <svg width="16" height="16" viewBox="0 0 16 16"><path d="m0 2 9-2 7 2-7 3z" fill="#555" /><path d="m0 2 8 3v11l-7-4z" fill="#a4a4a4" /><path d="m8 5 8-3-1 10-7 4z" fill="#606060" /></svg>
);

export default function App() {
  return (
    <Window>
      <GlobalStyle />
      <TitleBar>
        <FusionLogo s={15} />
        <AppTitle>Autodesk Fusion 360</AppTitle>
        <WindowButtons>
          <WindowButton aria-label="Minimizar"><svg width="10" height="10"><path d="M0 5.500h10" stroke="#000" /></svg></WindowButton>
          <WindowButton aria-label="Restaurar"><svg width="10" height="10" fill="none" stroke="#000"><path d="M.5 2.500h7v7h-7zM2.500 2V.5h7v7H8" /></svg></WindowButton>
          <WindowButton aria-label="Cerrar"><svg width="10" height="10" stroke="#000"><path d="m0 0 10 10M10 0 0 10" /></svg></WindowButton>
        </WindowButtons>
      </TitleBar>

      <TabBar>
        <QuickAccess>
          <QuickButton $after={18} aria-label="Panel de datos"><svg width="15" height="15" fill="currentColor">{[0, 5, 10].map((y) => [0, 5, 10].map((x) => <rect key={`${x}${y}`} x={x} y={y} width="4" height="4" />))}</svg></QuickButton>
          <QuickButton $after={19} aria-label="Archivo"><svg width="13" height="16" fill="currentColor"><path d="M0 0h8v5h5v11H0zM9 0l4 4H9z" /></svg><Caret /></QuickButton>
          <QuickButton $dim $after={19} aria-label="Guardar"><svg width="14" height="15" viewBox="0 0 14 15"><path d="M0 1h12l2 2v12H0z" fill="currentColor" /><path d="M3.500 1v5h7V1M3.500 15V9.500h7V15M7.500 11v3" fill="none" stroke="#d8d8d8" /></svg></QuickButton>
          <QuickButton $dim $after={12} aria-label="Deshacer"><svg width="14" height="14" fill="none" stroke="currentColor" strokeWidth="2"><path d="M6 1 2 5l4 4M2 5h5c4 0 6 3 6 8" /></svg><Caret /></QuickButton>
          <QuickButton $dim aria-label="Rehacer"><svg width="14" height="14" fill="none" stroke="currentColor" strokeWidth="2"><path d="m8 1 4 4-4 4M12 5H7c-4 0-6 3-6 8" /></svg><Caret /></QuickButton>
        </QuickAccess>
        <DocumentTab>
          <DocumentName><CubeGlyph />Nuke Knob v3</DocumentName>
          <CloseTab aria-label="Cerrar documento"><svg width="9" height="9" stroke="#777" strokeWidth="1.600"><path d="m0 0 9 9M9 0 0 9" /></svg></CloseTab>
        </DocumentTab>
        <NewTab aria-label="Nuevo diseño"><svg width="13" height="13" stroke="currentColor" strokeWidth="3"><path d="M6.500 0v13M0 6.500h13" /></svg></NewTab>
        <AccountButtons>
          {account.map(([name, icon]) => <AccountButton key={name} aria-label={name}>{icon}</AccountButton>)}
          <Avatar aria-label="Cuenta">
            <svg width="24" height="24" viewBox="0 0 24 24"><defs><clipPath id="face"><circle cx="12" cy="12" r="12" /></clipPath></defs><g clipPath="url(#face)"><path d="M0 0h24v24H0z" fill="#91a8c4" /><path d="M6 8c0-10 12-10 12 0 0 5-2 6-3 8v2l6 3v3H3v-3l6-3v-2C8 14 6 12 6 8z" fill="#46576f" /></g></svg>
          </Avatar>
        </AccountButtons>
      </TabBar>

      <Ribbon>
        <Workspace>DISEÑO <Caret /></Workspace>
        <RibbonBody>
          <RibbonTabs>
            {['SOLIDO', 'SUPERFICIE', 'MALLA', 'CHAPA', 'PLÁSTICO', 'UTILIDADES'].map((t, i) => <RibbonTab key={t} $active={i === 0}>{t}</RibbonTab>)}
          </RibbonTabs>
          <Groups>
            {groups.map((g) => (
              <Group key={g.name} $wide={g.wide}>
                <Tools>{g.icons.map((Icon, i) => <ToolButton key={i} $active={g.active} aria-label={`${g.name} ${i + 1}`}><Icon /></ToolButton>)}</Tools>
                <GroupMenu>{g.name}<Caret /></GroupMenu>
              </Group>
            ))}
          </Groups>
        </RibbonBody>
      </Ribbon>

      <Canvas>
        <Viewport />
        <CubeSlot><ViewCube /></CubeSlot>
        <div>
          <PanelHeader>
            <svg width="10" height="8" fill="#222"><path d="M5 1v6L0 4zM10 1v6L5 4z" /></svg>
            <PanelTitle>NAVEGADOR</PanelTitle>
            <svg width="10" height="10"><circle cx="5" cy="5" r="4.500" fill="#222" /><path d="M2 5h6" stroke="#fff" strokeWidth="1.500" /></svg>
            <Grip />
          </PanelHeader>
          <Tree>
            <TreeRow $root>
              <svg width="12" height="12"><path d="M11.500.5v11H.5z" fill="#888" stroke="#222" /></svg>
              <TreeItem $root>
                <Eye />
                <RootLabel>
                  <svg width="17" height="16" fill="#f5f5f5" stroke="#444"><path d="m1.500 4.500 4-4h10v11l-4 4h-10z" /><path d="m11.500 4.500 4-4v11l-4 4z" fill="#c5ced9" stroke="none" /></svg>
                  Nuke Knob v3
                </RootLabel>
                <svg width="13" height="13" viewBox="0 0 13 13"><circle cx="6.500" cy="6.500" r="5.700" fill="#fff" stroke="#222" /><circle cx="6.500" cy="6.500" r="2.300" fill="#222" /></svg>
              </TreeItem>
            </TreeRow>
            {tree.map(({ label, icon: Icon, eye }) => (
              <TreeRow key={label}>
                <Expander />
                <TreeItem>
                  {eye && <Eye off={eye === 'off'} />}
                  <Icon />
                  <TreeLabel>{label}</TreeLabel>
                </TreeItem>
              </TreeRow>
            ))}
          </Tree>
        </div>
        <BottomOverlay>
          <Comments>
            <PanelHeader>
              <PanelTitle $indent>COMENTARIOS</PanelTitle>
              <svg width="10" height="10"><circle cx="5" cy="5" r="4.500" fill="#222" /><path d="M2 5h6M5 2v6" stroke="#fff" strokeWidth="1.500" /></svg>
              <Grip />
            </PanelHeader>
          </Comments>
          <ViewTools>
            {viewTools.map(([name, pull, icon]) => <ViewTool key={name} $pull={pull} aria-label={name}>{icon}{pull > 0 && <Caret s={6} />}</ViewTool>)}
          </ViewTools>
        </BottomOverlay>
      </Canvas>

      <Timeline>
        <Playback>
          {playback.map(([name, d]) => <PlayButton key={name} aria-label={name}><svg width="16" height="16" fill="currentColor"><path d={d} /></svg></PlayButton>)}
        </Playback>
        <Features>
          {features.map((Icon, i) => (
            <Feature key={i} $edge={i === 0 ? 'start' : i === features.length - 1 ? 'end' : undefined}>
              <FeatureButton $selected={i === 7} aria-label={`Operación ${i + 1}`}><Icon s={18} /></FeatureButton>
            </Feature>
          ))}
          <MarkerSlot><svg width="12" height="32" fill="#666"><path d="M0 0h12v4L7 9v23H5V9L0 4z" /></svg></MarkerSlot>
        </Features>
        <SettingsButton aria-label="Ajustes"><Gear /></SettingsButton>
      </Timeline>

      <Taskbar>
        <TaskApps>
          {apps.map(([name, icon, state]) => <TaskButton key={name} aria-label={name} $open={state === 'open'} $current={state === 'current'}>{icon}</TaskButton>)}
        </TaskApps>
        <Tray>
          <svg width="14" height="16" fill="none" stroke="#fff" strokeWidth="1.300"><path d="m2 11 5-6 5 6" /></svg>
          <svg width="18" height="16" viewBox="0 0 18 16" fill="none" stroke="#fff"><path d="M5.500 5.500h10v6h-10V9M16 7v3" /><path d="M7 7h7v3H7z" fill="#fff" /><path d="M1 4h5v3H1zM2 2v2m3-2v2M3.500 7v4h2" /></svg>
          <svg width="18" height="16" viewBox="0 0 18 16" fill="none" stroke="#fff"><path d="M1.500 5.500h3l4-3.500v12l-4-3.500h-3zM10.500 6q1 2 0 4M12.500 4q3 4 0 8M14.500 2q4 6 0 12" /></svg>
          <svg width="16" height="16" viewBox="0 0 16 16" fill="none" stroke="#aaa"><path d="M2 14C2 8 7 3 14 3M5 14c0-5 4-8 9-8M8 14c0-3 3-5 6-5" /><circle cx="12" cy="13" r="1.500" fill="#fff" stroke="none" /></svg>
          <svg width="18" height="18" viewBox="0 0 18 18"><path d="m8 1 7 2v5c0 4-3 7-7 9-4-2-7-5-7-9V3z" fill="#fff" /><path d="M8 1v15M1 8h14" stroke="#20201f" /><circle cx="13" cy="13" r="5" fill="#159348" /><path d="m11 13 2 2 3-4" fill="none" stroke="#fff" /></svg>
          <svg width="18" height="18" viewBox="0 0 18 18" fill="none" stroke="#fff" strokeWidth="1.200"><path d="M5 9c-6 1-5 6-1 6M7 11l5-9c2-1 4 0 3 2l-5 9-4 2zM8 11l5-8M10 13c5-5 8-4 7-2s-3 1-4 1" /></svg>
          <Clock>2:45<br />1/11/2022</Clock>
          <Notifications aria-label="2 notificaciones">
            <svg width="28" height="28" viewBox="0 0 28 28"><path d="M3 4h16v11H8l-3 4v-4H3z" fill="#fff" /><path d="M6 7.500h10M6 10.500h10" stroke="#20201f" /><circle cx="19" cy="20" r="8" fill="#3b3b3a" stroke="#aaa" /><text x="19" y="24" fill="#fff" fontFamily="Open Sans, sans-serif" fontSize="11" textAnchor="middle">2</text></svg>
          </Notifications>
        </Tray>
      </Taskbar>
    </Window>
  );
}
